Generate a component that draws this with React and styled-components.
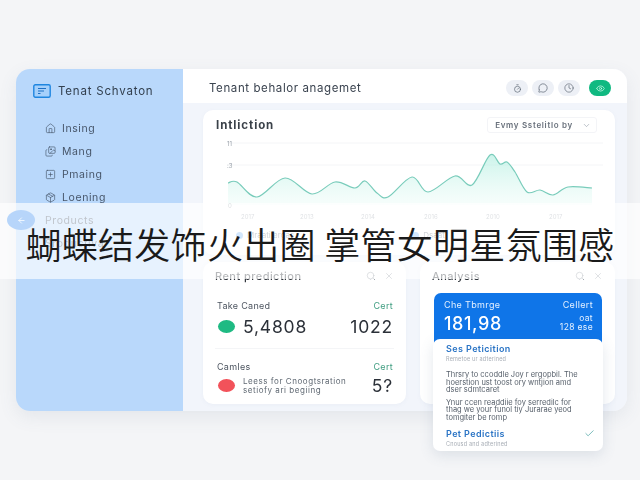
import React from "react";
import styled, { createGlobalStyle } from "styled-components";
import { House, Images, SquarePlus, Package, Search, X, ChevronDown, Check, ArrowLeft, Timer, MessageCircle, Clock, Eye } from "lucide-react";

const GlobalStyle = createGlobalStyle`
	html, body {
		margin: 0;
		padding: 0;
		background: #f3f4f6;
		font-family: "Inter", "Liberation Sans", sans-serif;
		color: #2f3640;
	}
`;

const Page = styled.div`
	position: relative;
	width: 640px;
	height: 480px;
	overflow: hidden;
	padding: 69px 13px 0 16px;
	box-sizing: border-box;
	background: #f4f5f7;
`;

const Frame = styled.div`
	display: flex;
	width: 611px;
	height: 342px;
	border-radius: 14px;
	overflow: hidden;
	box-shadow: 0 6px 18px rgba(90, 110, 140, 0.1);
	filter: blur(0.35px);
`;

const Sidebar = styled.aside`
	width: 167px;
	flex: none;
	background: #b9d8fb;
	padding: 15px 0 0 17px;
	box-sizing: border-box;
`;

const Brand = styled.div`
	display: flex;
	align-items: center;
	gap: 7px;
	height: 14px;
	font-size: 11.5px;
	letter-spacing: 0.8px;
	color: #33404f;
	margin-bottom: 22px;
`;

const Nav = styled.nav`
	display: flex;
	flex-direction: column;
	gap: 7px;
	padding-left: 12px;
`;

const NavItem = styled.div`
	display: flex;
	align-items: center;
	gap: 6px;
	height: 16px;
	font-size: 10.5px;
	letter-spacing: 0.6px;
	color: #47566a;
`;

const Main = styled.main`
	flex: 1;
	min-width: 0;
	display: flex;
	flex-direction: column;
	background: #f2f5fb;
`;

const Header = styled.header`
	display: flex;
	align-items: center;
	justify-content: space-between;
	height: 34px;
	flex: none;
	background: #fff;
	padding: 4px 16px 0 26px;
	box-sizing: border-box;
`;

const Title = styled.h1`
	margin: 0;
	font-size: 11.5px;
	font-weight: 400;
	letter-spacing: 0.6px;
	color: #3b4450;
`;

const HeaderTools = styled.div`
	display: flex;
	gap: 4px;
`;

const RoundButton = styled.span`
	display: flex;
	align-items: center;
	justify-content: center;
	width: 22px;
	height: 16px;
	margin-left: ${(p) => (p.$green ? "5px" : "0")};
	border-radius: 8px;
	background: ${(p) => (p.$green ? "#10b981" : "#edf0f6")};
	color: ${(p) => (p.$green ? "#d8fff0" : "#4a5563")};
`;

const Content = styled.div`
	flex: 1;
	display: flex;
	flex-direction: column;
	gap: 7px;
	padding: 7px 12px 7px 20px;
	min-height: 0;
`;

const ChartCard = styled.section`
	height: 145px;
	flex: none;
	background: #fff;
	border-radius: 10px;
	padding-top: 8px;
	box-sizing: border-box;
	box-shadow: 0 1px 4px rgba(120, 140, 170, 0.06);
`;

const ChartHead = styled.div`
	display: flex;
	align-items: center;
	justify-content: space-between;
	height: 14px;
	padding: 0 18px 0 13px;
`;

const ChartTitle = styled.h2`
	margin: 0;
	font-size: 11.5px;
	font-weight: 700;
	letter-spacing: 0.9px;
	color: #3a4149;
`;

const Select = styled.div`
	display: flex;
	align-items: center;
	gap: 9px;
	height: 14px;
	padding: 0 5px 0 7px;
	font-size: 8px;
	font-weight: 600;
	color: #69717c;
	letter-spacing: 0.7px;
	border: 1px solid #f3f4f7;
	border-radius: 3px;
`;

const ChartSvg = styled.svg`
	display: block;
	width: 412px;
	height: 92px;
`;

const Legend = styled.div`
	display: flex;
	gap: 118px;
	padding: 6px 0 0 33px;
	font-size: 8px;
	color: #7b8490;
`;

const LegendItem = styled.span`
	display: flex;
	align-items: center;
	gap: 4px;
`;

const LegendDot = styled.i`
	width: 7px;
	height: 7px;
	border-radius: 50%;
	background: ${(p) => p.$color};
`;

const Cards = styled.div`
	flex: 1;
	display: grid;
	grid-template-columns: 203px 195px;
	gap: 14px;
	min-height: 0;
`;

const Card = styled.section`
	background: #fff;
	border-radius: 10px;
	padding: 7px 12px 0;
	box-sizing: border-box;
	box-shadow: 0 1px 4px rgba(120, 140, 170, 0.06);
`;

const CardHead = styled.div`
	display: flex;
	align-items: center;
	justify-content: space-between;
	height: 14px;
	font-size: 11px;
	font-weight: 500;
	letter-spacing: 0.45px;
	color: #2e333a;
`;

const CardTools = styled.div`
	display: flex;
	gap: 8px;
	color: #6d7782;
`;

const Row = styled.div`
	padding: ${(p) => (p.$first ? "17px 1px 11px 2px" : "12px 1px 0 2px")};
	border-top: ${(p) => (p.$first ? "none" : "1px solid #f4f5f7")};
`;

const RowHead = styled.div`
	display: flex;
	justify-content: space-between;
	font-size: 9px;
	letter-spacing: 0.3px;
	color: #4d5560;
	margin-bottom: ${(p) => (p.$tight ? "3px" : "5px")};
`;

const RowLink = styled.span`
	color: #3f9d80;
`;

const RowBody = styled.div`
	display: flex;
	align-items: center;
	gap: 8px;
	padding-left: 1px;
`;

const Dot = styled.span`
	width: 17px;
	height: 13px;
	flex: none;
	border-radius: 50%;
	background: ${(p) => p.$color};
`;

const BigNumber = styled.span`
	font-size: 17.5px;
	letter-spacing: 0.8px;
	color: #2b3038;
`;

const RowNumber = styled(BigNumber)`
	margin-left: auto;
`;

const SmallText = styled.span`
	font-size: 8px;
	line-height: 9px;
	letter-spacing: 0.55px;
	white-space: nowrap;
	color: #5f6872;
`;

const Popup = styled.div`
	position: absolute;
	left: 433px;
	top: 293px;
	width: 170px;
	height: 158px;
	filter: blur(0.35px);
`;

const PopupTop = styled.div`
	height: 58px;
	margin: 0 1px;
	display: flex;
	justify-content: space-between;
	padding: 6px 9px 0 10px;
	box-sizing: border-box;
	border-radius: 7px 7px 0 0;
	background: #0f75e8;
	color: #e4f0ff;
`;

const PopupColumn = styled.div`
	display: flex;
	flex-direction: column;
	align-items: ${(p) => (p.$end ? "flex-end" : "flex-start")};
	font-size: 9px;
	letter-spacing: 0.35px;
`;

const PopupNumber = styled.span`
	font-size: 18px;
	font-weight: 500;
	letter-spacing: 0.6px;
	color: #fff;
	margin-top: 3px;
`;

const PopupSmall = styled.span`
	font-size: 8.5px;
	line-height: 9px;
	margin-top: ${(p) => (p.$gap ? "4px" : "0")};
`;

const PopupBody = styled.div`
	position: relative;
	height: 112px;
	margin-top: -12px;
	padding: 4px 8px 0 13px;
	box-sizing: border-box;
	border-radius: 7px;
	background: #fff;
	box-shadow: 0 4px 14px rgba(90, 110, 140, 0.16);
`;

const PopupHeading = styled.div`
	display: flex;
	justify-content: space-between;
	align-items: center;
	height: 11px;
	font-size: 9px;
	font-weight: 600;
	letter-spacing: 0.4px;
	color: #2a74c5;
	margin-top: ${(p) => (p.$gap ? "7px" : "0")};
`;

const PopupCaption = styled.div`
	font-size: 5.5px;
	color: #a7adb5;
	margin-top: 2px;
	letter-spacing: 0.2px;
`;

const PopupText = styled.p`
	margin: ${(p) => (p.$first ? "9px" : "5px")} 0 0;
	font-size: 7.5px;
	line-height: 7.5px;
	white-space: nowrap;
	color: #555e69;
`;

const Caption = styled.div`
	position: absolute;
	left: 0;
	top: 203px;
	width: 640px;
	height: 76px;
	padding-top: 4px;
	box-sizing: border-box;
	display: flex;
	align-items: center;
	justify-content: center;
	background: rgba(255, 255, 255, 0.66);
	font-family: "Noto Sans CJK SC", sans-serif;
	font-size: 36px;
	font-weight: 350;
	letter-spacing: 0.3px;
	white-space: pre;
	color: #1a1a1a;
`;

const BackBadge = styled.span`
	position: absolute;
	left: 7px;
	top: 210px;
	width: 28px;
	height: 20px;
	display: flex;
	align-items: center;
	justify-content: center;
	border-radius: 50%;
	background: #2c85f0;
	color: #fff;
`;

const points = [
	[25, 51], [34, 50], [54, 65], [82, 46], [109, 62], [132, 50], [152, 56], [162, 49],
	[174, 61], [185, 65], [209, 45], [225, 60], [252, 44], [269, 53], [287, 23], [297, 32],
	[304, 30], [312, 40], [324, 60], [337, 58], [350, 63], [365, 55], [389, 56],
];

// catmull-rom through the traced points
function smoothPath(pts) {
	let d = `M${pts[0][0]} ${pts[0][1]}`;
	for (let i = 0; i < pts.length - 1; i++) {
		const p0 = pts[i - 1] || pts[i];
		const p1 = pts[i];
		const p2 = pts[i + 1];
		const p3 = pts[i + 2] || p2;
		const c1x = p1[0] + (p2[0] - p0[0]) / 6;
		const c1y = p1[1] + (p2[1] - p0[1]) / 6;
		const c2x = p2[0] - (p3[0] - p1[0]) / 6;
		const c2y = p2[1] - (p3[1] - p1[1]) / 6;
		d += ` C${c1x} ${c1y} ${c2x} ${c2y} ${p2[0]} ${p2[1]}`;
	}
	return d;
}

const linePath = smoothPath(points);
const years = [
	["2017", 38], ["2013", 97], ["2014", 158], ["2016", 221], ["2010", 283], ["2017", 346],
];

const BrandIcon = () => (
	<svg width="18" height="14" viewBox="0 0 18 14" fill="none">
		<rect x="0.8" y="0.8" width="16.4" height="12.4" rx="1.5" fill="#a5d0fb" stroke="#1f86e0" strokeWidth="1.4" />
		<path d="M5 4.5h8M5 7h6M5 9.5h2.5" stroke="#1f70c4" strokeWidth="1.1" />
	</svg>
);

const navItems = [
	["Insing", House],
	["Mang", Images],
	["Pmaing", SquarePlus],
	["Loening", Package],
];

const App = () => (
	<Page>
		<GlobalStyle />
		<Frame>
			<Sidebar>
				<Brand>
					<BrandIcon />
					Tenat Schvaton
				</Brand>
				<Nav>
					{navItems.map(([label, Icon]) => (
						<NavItem key={label}>
							<Icon size={11} strokeWidth={1.4} />
							{label}
						</NavItem>
					))}
					<NavItem>Products</NavItem>
					<NavItem>Sroductiva</NavItem>
				</Nav>
			</Sidebar>
			<Main>
				<Header>
					<Title>Tenant behalor anagemet</Title>
					<HeaderTools>
						<RoundButton><Timer size={9} strokeWidth={1.6} /></RoundButton>
						<RoundButton><MessageCircle size={10} strokeWidth={1.5} /></RoundButton>
						<RoundButton><Clock size={10} strokeWidth={1.4} /></RoundButton>
						<RoundButton $green><Eye size={9} strokeWidth={1.8} /></RoundButton>
					</HeaderTools>
				</Header>
				<Content>
					<ChartCard>
						<ChartHead>
							<ChartTitle>Intliction</ChartTitle>
							<Select>
								Evmy Sstelitlo by
								<ChevronDown size={9} strokeWidth={1.5} color="#8b95a3" />
							</Select>
						</ChartHead>
						<ChartSvg viewBox="0 0 412 92">
							<defs>
								<linearGradient id="area" x1="0" y1="0" x2="0" y2="1">
									<stop offset="0" stopColor="#a8ecdc" stopOpacity="0.6" />
									<stop offset="1" stopColor="#e3faf4" stopOpacity="0.3" />
								</linearGradient>
							</defs>
							<path d="M25 11H400M25 33H400" stroke="#f4f5f7" strokeWidth="1" />
							<path d={`${linePath} L389 73 L25 73 Z`} fill="url(#area)" />
							<path d={linePath} fill="none" stroke="#79ccbb" strokeWidth="1.2" />
							<text x="24" y="14" fontSize="6" fill="#99a1aa">11</text>
							<text x="24" y="36" fontSize="6" fill="#99a1aa">:3</text>
							<text x="25" y="76" fontSize="6" fill="#99a1aa">0</text>
							{years.map(([year, x], i) => (
								<text key={i} x={x} y="87" fontSize="6" fill="#a2a9b2">{year}</text>
							))}
						</ChartSvg>
						<Legend>
							<LegendItem><LegendDot $color="#7fb8f5" />Mraati ergas</LegendItem>
							<LegendItem><LegendDot $color="#7fb8f5" />Dsaat</LegendItem>
						</Legend>
					</ChartCard>
					<Cards>
						<Card>
							<CardHead>
								Rent prediction
								<CardTools>
									<Search size={10} strokeWidth={1.5} />
									<X size={10} strokeWidth={1.5} />
								</CardTools>
							</CardHead>
							<Row $first>
								<RowHead>
									Take Caned
									<RowLink>Cert</RowLink>
								</RowHead>
								<RowBody>
									<Dot $color="#1fba83" />
									<BigNumber>5,4808</BigNumber>
									<RowNumber>1022</RowNumber>
								</RowBody>
							</Row>
							<Row>
								<RowHead $tight>
									Camles
									<RowLink>Cert</RowLink>
								</RowHead>
								<RowBody>
									<Dot $color="#f2525a" />
									<SmallText>
										Leess for Cnoogtsration
										<br />
										setiofy ari begiing
									</SmallText>
									<RowNumber>5?</RowNumber>
								</RowBody>
							</Row>
						</Card>
						<Card>
							<CardHead>
								Analysis
								<CardTools>
									<Search size={10} strokeWidth={1.5} />
									<X size={10} strokeWidth={1.5} />
								</CardTools>
							</CardHead>
						</Card>
					</Cards>
				</Content>
			</Main>
		</Frame>
		<Popup>
			<PopupTop>
				<PopupColumn>
					Che Tbmrge
					<PopupNumber>181,98</PopupNumber>
				</PopupColumn>
				<PopupColumn $end>
					Cellert
					<PopupSmall $gap>oat</PopupSmall>
					<PopupSmall>128 ese</PopupSmall>
				</PopupColumn>
			</PopupTop>
			<PopupBody>
				<PopupHeading>Ses Peticition</PopupHeading>
				<PopupCaption>Remetoe ur adterined</PopupCaption>
				<PopupText $first>
					Thrsry to ccoddle Joy r ergopbil. The
					<br />
					hoerstion ust toost ory wntjion amd
					<br />
					dser sdmtcaret
				</PopupText>
				<PopupText>
					Ynur ccen readdiie foy serredilc for
					<br />
					thag we your funol tiy Jurarae yeod
					<br />
					tomgiter be romp
				</PopupText>
				<PopupHeading $gap>
					Pet Pedictiis
					<Check size={11} strokeWidth={1.5} color="#3f9d9d" />
				</PopupHeading>
				<PopupCaption>Cnousd and adterined</PopupCaption>
			</PopupBody>
		</Popup>
		<BackBadge><ArrowLeft size={9} strokeWidth={2} /></BackBadge>
		<Caption>蝴蝶结发饰火出圈 掌管女明星氛围感</Caption>
	</Page>
);

export default App;
